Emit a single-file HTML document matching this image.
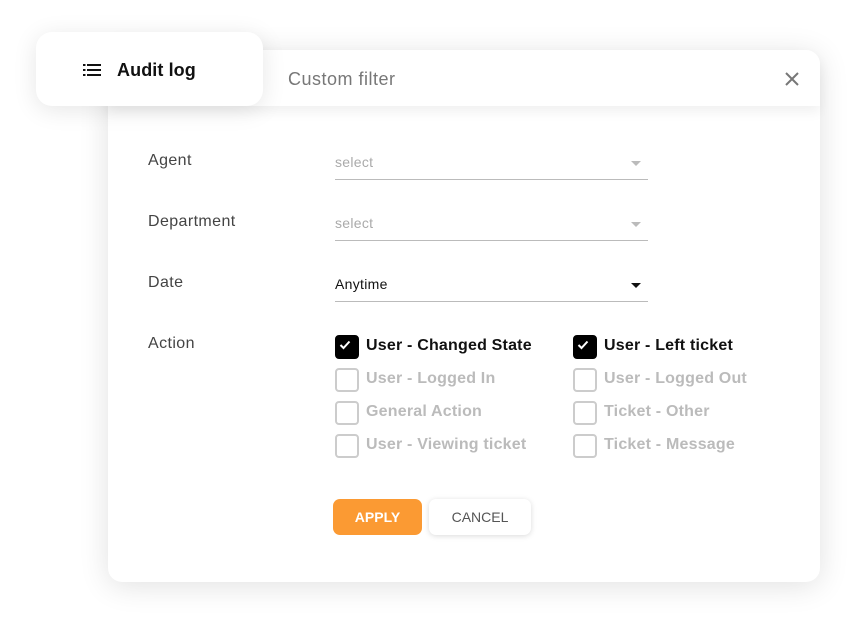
<!DOCTYPE html>
<html><head><meta charset="utf-8"><style>
*{box-sizing:border-box;margin:0;padding:0}
body{width:856px;height:623px;background:#fff;font-family:"Liberation Sans",sans-serif;position:relative;overflow:hidden}
.card{position:absolute;left:108px;top:50px;width:712px;height:532px;background:#fff;border-radius:14px;box-shadow:0 4px 30px rgba(0,0,0,.12)}
.head{position:absolute;left:0;top:0;width:712px;height:56px;background:#fff;border-radius:14px 14px 0 0;box-shadow:0 6px 12px rgba(0,0,0,.06)}
.title{position:absolute;left:180px;top:19px;font-size:18px;letter-spacing:.5px;color:#777}
.x{position:absolute;left:676px;top:21px}
.tab{position:absolute;left:36px;top:32px;width:227px;height:74px;background:#fff;border-radius:16px;box-shadow:0 4px 24px rgba(0,0,0,.1);z-index:2}
.tab .t{position:absolute;left:81px;top:28px;font-size:18px;font-weight:bold;color:#111;letter-spacing:.1px}
.lbl{position:absolute;left:148px;font-size:16px;letter-spacing:.4px;color:#444}
.sel{position:absolute;left:335px;width:313px;height:28px;border-bottom:1px solid #bbb;font-size:14px;color:#aaa;letter-spacing:.3px}
.sel span{position:absolute;left:0;top:2px}
.sel i{position:absolute;right:7px;top:9px;border-left:5px solid transparent;border-right:5px solid transparent;border-top:5px solid #bbb}
.cb{position:absolute;font-size:16px;font-weight:bold;color:#bbb;height:20px;line-height:20px;padding-left:31px;letter-spacing:.2px}
.cb span{position:relative;top:1px}
.cb:before{content:"";position:absolute;left:0;top:0;width:20px;height:20px;border:2px solid #ccc;border-radius:4px}
.cb.on{color:#111}
.cb.on:before{background:#000;border-color:#000}
.cb.on svg{position:absolute;left:4px;top:5px}
.btn{position:absolute;top:499px;height:36px;border-radius:7px;font-size:14px;text-align:center;line-height:36px}
</style></head><body>
<div class="card">
 <div class="head"><div class="title">Custom filter</div>
 <svg class="x" width="16" height="16" viewBox="0 0 16 16"><path d="M2 2L14 14M14 2L2 14" stroke="#777" stroke-width="2"/></svg></div>
</div>
<div class="tab">
 <svg style="position:absolute;left:47px;top:32px" width="18" height="12" viewBox="0 0 18 12"><g fill="#111"><rect x="0" y="0" width="2.5" height="2"/><rect x="4" y="0" width="14" height="2"/><rect x="0" y="5" width="2.5" height="2"/><rect x="4" y="5" width="14" height="2"/><rect x="0" y="10" width="2.5" height="2"/><rect x="4" y="10" width="14" height="2"/></g></svg>
 <div class="t">Audit log</div>
</div>
<div class="lbl" style="top:152px">Agent</div>
<div class="lbl" style="top:213px">Department</div>
<div class="lbl" style="top:274px">Date</div>
<div class="lbl" style="top:335px">Action</div>
<div class="sel" style="top:152px"><span>select</span><i></i></div>
<div class="sel" style="top:213px"><span>select</span><i></i></div>
<div class="sel" style="top:274px;color:#111"><span>Anytime</span><i style="border-top-color:#111"></i></div>
<div class="cb on" style="left:335px;top:335px"><svg width="12" height="10" viewBox="0 0 12 10"><path d="M1.5 5L4.5 8L10.5 1.5" stroke="#fff" stroke-width="2" fill="none"/></svg><span>User - Changed State</span></div>
<div class="cb on" style="left:573px;top:335px"><svg width="12" height="10" viewBox="0 0 12 10"><path d="M1.5 5L4.5 8L10.5 1.5" stroke="#fff" stroke-width="2" fill="none"/></svg><span>User - Left ticket</span></div>
<div class="cb" style="left:335px;top:368px"><span>User - Logged In</span></div>
<div class="cb" style="left:573px;top:368px"><span>User - Logged Out</span></div>
<div class="cb" style="left:335px;top:401px"><span>General Action</span></div>
<div class="cb" style="left:573px;top:401px"><span>Ticket - Other</span></div>
<div class="cb" style="left:335px;top:434px"><span>User - Viewing ticket</span></div>
<div class="cb" style="left:573px;top:434px"><span>Ticket - Message</span></div>
<div class="btn" style="left:333px;width:89px;background:#fb9a33;color:#fff;font-weight:bold">APPLY</div>
<div class="btn" style="left:429px;width:102px;background:#fff;color:#555;box-shadow:0 1px 6px rgba(0,0,0,.15)">CANCEL</div>
</body></html>
